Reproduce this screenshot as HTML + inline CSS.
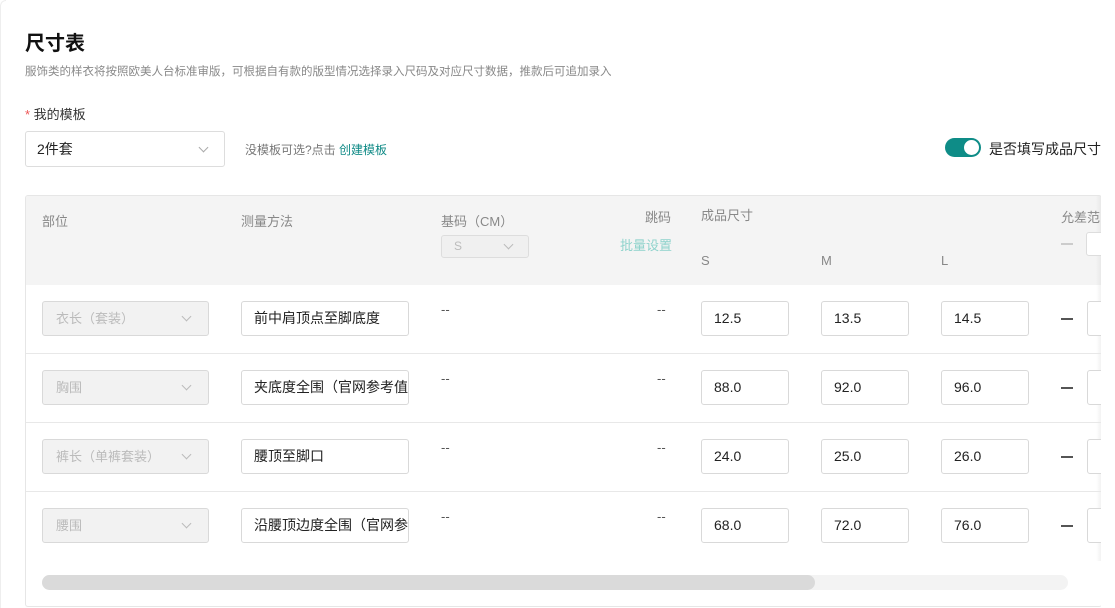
<!DOCTYPE html>
<html><head><meta charset="utf-8"><style>
*{box-sizing:border-box;margin:0;padding:0}
body{width:1115px;height:608px;background:#fff;font-family:"Liberation Sans","Noto Sans CJK SC",sans-serif;position:relative;overflow:hidden;color:#222}
.a{position:absolute;white-space:nowrap}
.t{font-size:13px}
.sel{position:absolute;border:1px solid #d9d9d9;border-radius:3px;background:#f2f2f2;color:#bbb;font-size:13px;padding-left:13px;line-height:33px;height:35px;width:167px}
.chev{position:absolute;width:7px;height:7px;border-right:1px solid #aaa;border-bottom:1px solid #aaa;transform:rotate(45deg)}
.inp{position:absolute;border:1px solid #d9d9d9;border-radius:3px;background:#fff;font-size:14px;height:35px;line-height:33px;padding-left:12px;overflow:hidden;white-space:nowrap;color:#222}
.dash{position:absolute;width:12px;height:2px;background:#555}
</style></head><body>
<div class="a" style="left:0;top:0;width:6px;height:608px;border-left:1px solid #eee;border-top:1px solid #eee;border-radius:6px 0 0 0"></div>
<div class="a" style="left:25px;top:27px;font-size:20px;font-weight:bold;color:#111">尺寸表</div>
<div class="a" style="left:25px;top:63px;font-size:11.5px;color:#888">服饰类的样衣将按照欧美人台标准审版，可根据自有款的版型情况选择录入尺码及对应尺寸数据，推款后可追加录入</div>
<div class="a" style="left:25px;top:104px;font-size:13px;color:#333"><span style="color:#e55">*</span> 我的模板</div>
<div class="a" style="left:25px;top:131px;width:200px;height:36px;border:1px solid #ddd;border-radius:3px;font-size:14px;line-height:34px;padding-left:11px">2件套</div>
<div class="chev" style="left:200px;top:144px"></div>
<div class="a" style="left:245px;top:141px;font-size:12px;color:#777">没模板可选?点击 <span style="color:#0f8a86">创建模板</span></div>
<div class="a" style="left:945px;top:138px;width:36px;height:19px;border-radius:10px;background:#0e8c87"></div>
<div class="a" style="left:964px;top:140px;width:15px;height:15px;border-radius:50%;background:#fff"></div>
<div class="a" style="left:989px;top:139px;font-size:14px;color:#222">是否填写成品尺寸</div>

<div class="a" style="left:25px;top:195px;width:1077px;height:412px;border:1px solid #e6e6e6;border-right:none;border-radius:3px;overflow:hidden">
<div class="a" style="left:0;top:0;width:1077px;height:89px;background:#f4f4f4"></div>
</div>
<div class="a" style="left:1096px;top:196px;width:6px;height:365px;background:linear-gradient(90deg,rgba(0,0,0,0),rgba(0,0,0,0.06))"></div>

<div class="a t" style="left:42px;top:211px;color:#888">部位</div>
<div class="a t" style="left:241px;top:211px;color:#888">测量方法</div>
<div class="a t" style="left:441px;top:211px;color:#888">基码（CM）</div>
<div class="a" style="left:441px;top:235px;width:88px;height:23px;border:1px solid #ddd;border-radius:3px;background:#f0f0f0;color:#bbb;font-size:12px;line-height:21px;padding-left:12px">S</div>
<div class="chev" style="left:505px;top:241px;border-color:#bbb"></div>
<div class="a t" style="left:645px;top:207px;color:#888">跳码</div>
<div class="a t" style="left:620px;top:235px;color:#8fd3cc">批量设置</div>
<div class="a t" style="left:701px;top:205px;color:#888">成品尺寸</div>
<div class="a t" style="left:701px;top:253px;color:#888">S</div>
<div class="a t" style="left:821px;top:253px;color:#888">M</div>
<div class="a t" style="left:941px;top:253px;color:#888">L</div>
<div class="a" style="left:1061px;top:207px;width:39px;overflow:hidden;font-size:13px;color:#888">允差范围</div>
<div class="dash" style="left:1061px;top:243px;background:#ccc"></div>
<div class="a" style="left:1086px;top:232px;width:20px;height:24px;border:1px solid #ddd;border-radius:3px;background:#fff"></div>

<div class="a" style="left:1101px;top:195px;width:14px;height:413px;background:#fff"></div>

<!-- rows -->
<div id="rows"></div>
<script></script>

<div class="a" style="left:26px;top:353px;width:1075px;height:1px;background:#e8e8e8"></div>
<div class="a" style="left:26px;top:422px;width:1075px;height:1px;background:#e8e8e8"></div>
<div class="a" style="left:26px;top:491px;width:1075px;height:1px;background:#e8e8e8"></div>

<!-- row 1 -->
<div class="sel" style="left:42px;top:301px">衣长（套装）</div><div class="chev" style="left:183px;top:313px;border-color:#bbb"></div>
<div class="inp" style="left:241px;top:301px;width:168px">前中肩顶点至脚底度</div>
<div class="a" style="left:441px;top:302px;color:#555;font-size:13px">--</div>
<div class="a" style="left:657px;top:302px;color:#555;font-size:13px">--</div>
<div class="inp" style="left:701px;top:301px;width:88px">12.5</div>
<div class="inp" style="left:821px;top:301px;width:88px">13.5</div>
<div class="inp" style="left:941px;top:301px;width:88px">14.5</div>
<div class="dash" style="left:1061px;top:318px"></div>
<div class="inp" style="left:1087px;top:301px;width:30px"></div>

<!-- row 2 -->
<div class="sel" style="left:42px;top:370px">胸围</div><div class="chev" style="left:183px;top:382px;border-color:#bbb"></div>
<div class="inp" style="left:241px;top:370px;width:168px">夹底度全围（官网参考值）</div>
<div class="a" style="left:441px;top:371px;color:#555;font-size:13px">--</div>
<div class="a" style="left:657px;top:371px;color:#555;font-size:13px">--</div>
<div class="inp" style="left:701px;top:370px;width:88px">88.0</div>
<div class="inp" style="left:821px;top:370px;width:88px">92.0</div>
<div class="inp" style="left:941px;top:370px;width:88px">96.0</div>
<div class="dash" style="left:1061px;top:387px"></div>
<div class="inp" style="left:1087px;top:370px;width:30px"></div>

<!-- row 3 -->
<div class="sel" style="left:42px;top:439px">裤长（单裤套装）</div><div class="chev" style="left:183px;top:451px;border-color:#bbb"></div>
<div class="inp" style="left:241px;top:439px;width:168px">腰顶至脚口</div>
<div class="a" style="left:441px;top:440px;color:#555;font-size:13px">--</div>
<div class="a" style="left:657px;top:440px;color:#555;font-size:13px">--</div>
<div class="inp" style="left:701px;top:439px;width:88px">24.0</div>
<div class="inp" style="left:821px;top:439px;width:88px">25.0</div>
<div class="inp" style="left:941px;top:439px;width:88px">26.0</div>
<div class="dash" style="left:1061px;top:456px"></div>
<div class="inp" style="left:1087px;top:439px;width:30px"></div>

<!-- row 4 -->
<div class="sel" style="left:42px;top:508px">腰围</div><div class="chev" style="left:183px;top:520px;border-color:#bbb"></div>
<div class="inp" style="left:241px;top:508px;width:168px">沿腰顶边度全围（官网参考值）</div>
<div class="a" style="left:441px;top:509px;color:#555;font-size:13px">--</div>
<div class="a" style="left:657px;top:509px;color:#555;font-size:13px">--</div>
<div class="inp" style="left:701px;top:508px;width:88px">68.0</div>
<div class="inp" style="left:821px;top:508px;width:88px">72.0</div>
<div class="inp" style="left:941px;top:508px;width:88px">76.0</div>
<div class="dash" style="left:1061px;top:525px"></div>
<div class="inp" style="left:1087px;top:508px;width:30px"></div>

<div class="a" style="left:1101px;top:280px;width:14px;height:328px;background:#fff"></div>

<div class="a" style="left:42px;top:575px;width:1026px;height:15px;border-radius:8px;background:#f3f3f3"></div>
<div class="a" style="left:42px;top:575px;width:773px;height:15px;border-radius:8px;background:#dadada"></div>
</body></html>
